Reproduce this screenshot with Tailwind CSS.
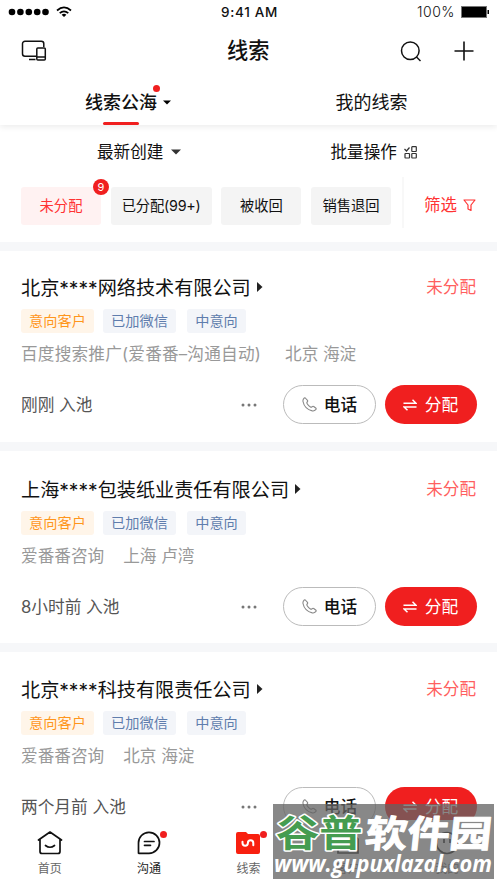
<!DOCTYPE html>
<html lang="zh-CN">
<head>
<meta charset="utf-8">
<title>线索</title>
<script src="https://cdn.jsdelivr.net/npm/@tailwindcss/browser@4"></script>
</head>
<body class="w-[497px] h-[883px] overflow-hidden bg-white text-[#111] font-['Inter','Noto_Sans_CJK_SC',sans-serif]">
<div class="relative flex h-[883px] w-[497px] flex-col overflow-hidden">
  <header class="relative z-10 shrink-0 bg-white shadow-[0_2px_6px_rgba(0,0,0,0.08)]">
    <div class="grid h-6 grid-cols-3 items-center px-2 text-[13.5px] leading-6">
      <div class="flex items-center gap-[6px]">
        <svg width="42" height="8" viewBox="0 0 42 8"><circle cx="4" cy="4" r="3.3"/><circle cx="12.4" cy="4" r="3.3"/><circle cx="20.8" cy="4" r="3.3"/><circle cx="29.2" cy="4" r="3.3"/><circle cx="37.5" cy="4" r="3.3"/></svg>
        <svg width="16" height="12" viewBox="0 0 16 12" fill="none" stroke="#000" stroke-width="1.7"><path d="M1 4.5Q8-1.8 15 4.5M3.7 7.2Q8 3.4 12.3 7.2"/><path d="M5.6 8.7Q8 7 10.4 8.7L8 11Z" fill="#000" stroke="none"/></svg>
      </div>
      <div class="pl-[2px] text-center font-medium tracking-[0.7px]">9:41 AM</div>
      <div class="flex items-center justify-end gap-[6px] text-[14px] font-light tracking-[0.5px]"><span>100%</span><svg width="28" height="12" viewBox="0 0 28 12"><rect x=".5" y=".5" width="25" height="11" fill="#000" stroke="#777"/><path d="M26.5 4h1.5v4h-1.5z"/></svg></div>
    </div>
    <div class="flex h-[54px] items-center pl-[21px] pr-[23px]">
      <svg width="26" height="22" viewBox="0 0 26 22" fill="none" stroke="#111" stroke-width="1.5"><path d="M22.8 7V3.8a2.5 2.5 0 0 0-2.500-2.500H4A2.500 2.500 0 0 0 1.500 3.800v10A2.500 2.500 0 0 0 4 16.300h11.500M8 19.500h6.500"/><rect x="15.800" y="8" width="8.500" height="12" rx="1"/><path d="M16 17h8"/></svg>
      <h1 class="ml-[180px] text-[21.2px] font-medium leading-none">线索</h1>
      <div class="ml-auto flex items-center gap-[32px]">
        <svg width="22" height="22" viewBox="0 0 22 22" fill="none" stroke="#111" stroke-width="1.500"><circle cx="10.300" cy="10.800" r="8.800"/><path d="M16.500 17l4 4"/></svg>
        <svg width="20" height="20" viewBox="0 0 20 20" stroke="#111" stroke-width="1.600"><path d="M.5 10h19M10 .5v19"/></svg>
      </div>
    </div>
    <nav class="grid h-[47px] grid-cols-2 text-[18px]">
      <div class="relative flex items-center pl-[85px] pt-[1px] font-medium">线索公海
        <svg class="ml-[6px]" width="8" height="5" viewBox="0 0 8 5"><path d="M0 .5h8L4 4.500z"/></svg>
        <i class="absolute left-[153px] top-[7px] size-[7px] rounded-full bg-[#f01f1f]"></i>
        <i class="absolute bottom-0 left-[103px] h-[3px] w-9 rounded bg-[#f01f1f]"></i>
      </div>
      <div class="flex items-center pl-[87px] pt-[1px]">我的线索</div>
    </nav>
  </header>

  <section class="h-[117px] shrink-0 bg-white">
    <div class="grid h-[52px] grid-cols-2 pt-[2px] text-[16.600px]">
      <div class="flex items-center pl-[97px]">最新创建<svg class="ml-2" width="10" height="6" viewBox="0 0 10 6" fill="#333"><path d="M0 .5h10L5 5.500z"/></svg></div>
      <div class="flex items-center pl-[82px]">批量操作
        <svg class="ml-[7px]" width="14" height="13" viewBox="0 0 14 13" fill="none" stroke="#333" stroke-width="1.200"><path d="M.5 3l2 2 3-3.500"/><rect x="7.800" y=".700" width="4.500" height="4.800" rx=".5"/><rect x="1" y="7.500" width="4.500" height="4.500" rx=".5"/><rect x="7.800" y="7.500" width="4.500" height="4.500" rx=".5"/></svg>
      </div>
    </div>
    <div class="flex pl-[21px] text-[14.300px]">
      <div class="flex flex-1 gap-[9.700px] pt-[10px]">
        <div class="relative flex h-[38px] w-[80px] items-center justify-center rounded-[3px] bg-[#fff2f2] text-[#f33]">未分配<span class="absolute -right-2 -top-2 flex size-4 items-center justify-center rounded-full bg-[#f01f1f] text-[11px] text-white">9</span></div>
        <div class="flex h-[38px] w-[101px] items-center justify-center rounded-[3px] bg-[#f4f4f4] tracking-[-0.200px]">已分配(99+)</div>
        <div class="flex h-[38px] w-[80px] items-center justify-center rounded-[3px] bg-[#f4f4f4]">被收回</div>
        <div class="flex h-[38px] w-[80px] items-center justify-center rounded-[3px] bg-[#f4f4f4]">销售退回</div>
      </div>
      <div class="flex h-[51px] w-[95px] items-center border-l-2 border-[#f8f8f8] pl-5 pt-[5px] text-[16.500px] text-[#f33]">筛选
        <svg class="ml-[6px]" width="13" height="13" viewBox="0 0 13 13" fill="none" stroke="#f33" stroke-width="1.200" stroke-linejoin="round"><path d="M1 1h11L8 6v5.500L5 10V6z"/></svg>
      </div>
    </div>
  </section>

  <main id="leads" class="shrink-0"></main>

  <footer class="absolute bottom-0 left-0 z-20 grid h-[63px] w-full grid-cols-5 bg-white text-[12px] text-[#666]">
    <div class="flex flex-col items-center pt-[11px]">
      <svg width="26" height="24" viewBox="0 0 26 24" fill="none" stroke="#111" stroke-width="1.700" stroke-linecap="round" stroke-linejoin="round"><path d="M1.500 9L13 1l11.500 8M3 8v12.500q0 2 2 2h16q2 0 2-2V8M8.500 14.500q4.500 3.500 9 0"/></svg>
      <span class="mt-[5px] leading-[18px]">首页</span>
    </div>
    <div class="relative flex flex-col items-center pt-[11px]">
      <svg width="24" height="24" viewBox="0 0 24 24" fill="none" stroke="#111" stroke-width="1.700" stroke-linecap="round"><path d="M1.500 22V12A10.500 10.500 0 1 1 12 22.300H2zM7.500 10.500h9.500M7.500 14.300h6"/></svg>
      <i class="absolute left-[61px] top-[11px] size-[7px] rounded-full bg-[#f01f1f]"></i>
      <span class="mt-[5px] leading-[18px] text-[#222]">沟通</span>
    </div>
    <div class="relative flex flex-col items-center pt-[11px]">
      <svg width="24" height="24" viewBox="0 0 24 24" fill="none"><path d="M2 1h8l2 2h10q2 0 2 2v16q0 2-2 2H2q-2 0-2-2V3q0-2 2-2z" fill="#f8200f"/><path d="M6.500 10.800v1.200a2.700 2.700 0 0 0 5.400 0a2.700 2.700 0 0 1 5.400 0v2.300" stroke="#fff" stroke-width="2" stroke-linecap="round"/></svg>
      <i class="absolute left-[61px] top-[11px] size-[7px] rounded-full bg-[#f01f1f]"></i>
      <span class="mt-[5px] leading-[18px]">线索</span>
    </div>
    <div class="flex flex-col items-center pt-[11px]">
      <svg width="24" height="24" viewBox="0 0 24 24" fill="none" stroke="#111" stroke-width="1.700"><path d="M2 2h14l6 6v14H2zM7 10h7"/></svg>
      <span class="mt-[5px] leading-[18px]">客户</span>
    </div>
    <div class="flex flex-col items-center pt-[11px]">
      <svg width="24" height="24" viewBox="0 0 24 24" fill="none" stroke="#111" stroke-width="1.700"><circle cx="12" cy="12" r="10.500"/><path d="M9 8v4M15 8v4"/></svg>
      <span class="mt-[5px] leading-[18px]">我的</span>
    </div>
  </footer>

  <aside class="absolute left-[273px] top-[804px] z-30 h-[75px] w-[221px] bg-[#626262]/76">
    <svg width="224" height="79" viewBox="0 0 224 79" class="overflow-visible">
      <g font-family="Noto Sans CJK SC, sans-serif" font-weight="700" font-size="37" paint-order="stroke" stroke-linejoin="round">
        <text transform="translate(3 43) scale(1.170 1)" fill="#459c50" stroke="#fff" stroke-width="3">谷普</text>
        <text transform="translate(91 43) skewX(-6) scale(1.140 1)" fill="#fff" stroke="#fff" stroke-width="1">软件园</text>
      </g>
      <text x="1" y="67.500" textLength="218" lengthAdjust="spacingAndGlyphs" font-family="Open Sans, sans-serif" font-style="italic" font-weight="700" font-size="22.500" fill="#fff">www.gupuxlazal.com</text>
    </svg>
  </aside>
</div>

<template id="lead">
  <article class="border-t-[9px] border-[#f6f7f9] bg-white px-[21px]">
    <div class="flex h-[26px] items-center text-[19.150px]">
      <h2 data-f="name" class="whitespace-nowrap pt-[2px]"></h2>
      <svg class="ml-[6px]" width="6" height="10" viewBox="0 0 6 10" fill="#222"><path d="M0 0l5.500 5L0 10z"/></svg>
      <span class="ml-auto text-[16.600px] text-[#ff5f5f]">未分配</span>
    </div>
    <div class="mt-[9px] flex h-6 text-[14.200px] leading-6">
      <span class="w-[73px] rounded-[3px] bg-[#fff5e9] text-center text-[#ff961c]">意向客户</span>
      <span class="ml-[9px] w-[73px] rounded-[3px] bg-[#f3f5f9] text-center text-[#5f7dad]">已加微信</span>
      <span class="ml-[11px] w-[59px] rounded-[3px] bg-[#f3f5f9] text-center text-[#5f7dad]">中意向</span>
    </div>
    <div class="mt-[9px] flex h-[25px] items-center text-[16.650px] text-[#999]"><span data-f="src" class="whitespace-nowrap"></span><span data-f="city" class="whitespace-nowrap"></span></div>
    <div class="mt-[18px] flex h-[39px] items-center text-[16.700px]">
      <span data-f="time" class="pt-[2px] text-[#555]"></span>
      <svg class="ml-auto" width="16" height="4" viewBox="0 0 16 4" fill="#777"><circle cx="2" cy="2" r="1.500"/><circle cx="8" cy="2" r="1.500"/><circle cx="14" cy="2" r="1.500"/></svg>
      <button class="ml-[26px] flex h-[39px] w-[93px] items-center justify-center gap-[7px] rounded-full border border-[#bbb] font-medium">
        <svg width="15" height="15" viewBox="0 0 15 15" fill="none" stroke="#888" stroke-width="1.100" stroke-linejoin="round"><path d="M3.300 1L5.500 3.400Q6 4.200 5.200 5Q4.500 5.700 5.200 6.700Q6.500 8.800 8.400 9.900Q9.400 10.500 10 9.800Q10.800 9 11.700 9.500L14 11.300Q14.500 12 13.700 12.700Q12.400 14.300 10.300 13.900Q2.500 12 1 4.500Q.6 2.300 2.300 1Q2.900.600 3.300 1Z"/></svg><span class="pt-[2px]">电话</span></button>
      <button class="-mr-[0.500px] ml-[8.500px] flex h-[39px] w-[92px] items-center justify-center gap-[8px] rounded-full bg-[#f01f1f] text-white">
        <svg width="14" height="12" viewBox="0 0 14 12" fill="none" stroke="#fff" stroke-width="1.500"><path d="M.5 4.300H13L9.500.800M13.500 8H1l3.500 3.300"/></svg><span class="pt-[2px]">分配</span></button>
    </div>
  </article>
</template>
<script>
const leads = [
  {name:'北京****网络技术有限公司', src:'百度搜索推广(爱番番–沟通自动)', city:'北京 海淀', time:'刚刚 入池', gap:24, top:23, bottom:18, tracking:0.2},
  {name:'上海****包装纸业责任有限公司', src:'爱番番咨询', city:'上海 卢湾', time:'8小时前 入池', gap:19, top:25, bottom:17, tracking:0},
  {name:'北京****科技有限责任公司', src:'爱番番咨询', city:'北京 海淀', time:'两个月前 入池', gap:19, top:24, bottom:18, tracking:0}
];
for (const d of leads) {
  const n = document.getElementById('lead').content.cloneNode(true);
  n.querySelectorAll('[data-f]').forEach(e => e.textContent = d[e.dataset.f]);
  n.querySelector('[data-f=city]').style.marginLeft = d.gap + 'px';
  n.querySelector('[data-f=src]').style.letterSpacing = d.tracking + 'px';
  const a = n.querySelector('article');
  a.style.paddingTop = d.top + 'px';
  a.style.paddingBottom = d.bottom + 'px';
  document.getElementById('leads').append(n);
}
</script>
</body>
</html>
